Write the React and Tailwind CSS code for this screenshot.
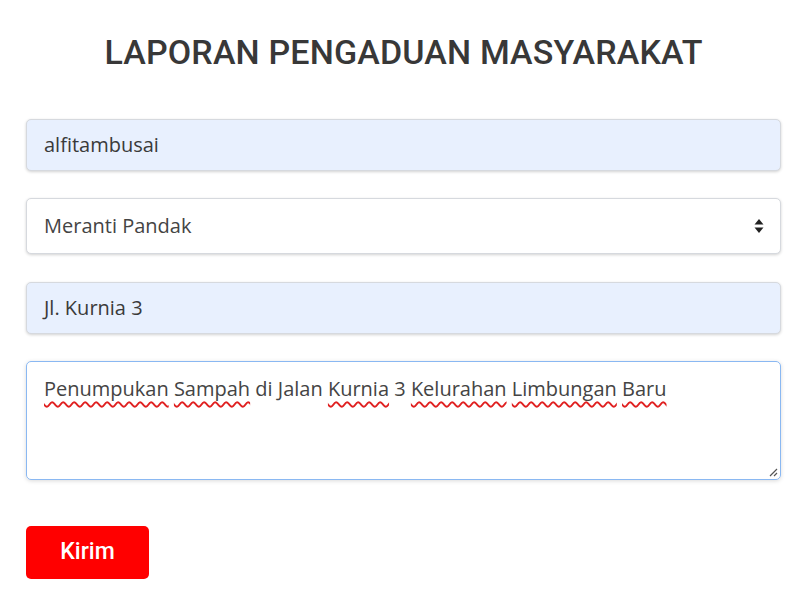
import React from "react";

const field =
  "w-full rounded-[5px] border border-[#d6d9de] shadow-[0_1px_3px_rgba(0,0,0,0.18)] px-[17px] text-[20px] text-[#3a3a3a]";

function Squiggle({ children }) {
  return (
    <span className="underline decoration-wavy decoration-[#e02020] decoration-[1.5px] underline-offset-[5px]">
      {children}
    </span>
  );
}

export default function App() {
  return (
    <div className="min-h-screen w-full bg-white font-['Open_Sans',sans-serif]">
      <div className="px-[26px] pt-[32px] pr-[19px]">
        <h1 className="text-center font-['Roboto',sans-serif] font-medium text-[34px] text-[#383838] tracking-[0.15px] leading-[40px]">
          LAPORAN PENGADUAN MASYARAKAT
        </h1>

        <form className="mt-[47px] flex flex-col">
          <div className={`${field} bg-[#e8f0fe] h-[52px] flex items-center`}>
            alfitambusai
          </div>

          <div className={`${field} bg-white h-[56px] mt-[27px] flex items-center justify-between text-[#444] pr-[16px]`}>
            <span>Meranti Pandak</span>
            <svg width="10" height="16" viewBox="0 0 10 16">
              <path d="M5 1 L9.5 6.5 H0.5 Z" fill="#222" />
              <path d="M5 15 L9.5 9.5 H0.5 Z" fill="#222" />
            </svg>
          </div>

          <div className={`${field} bg-[#e8f0fe] h-[52px] mt-[28px] flex items-center`}>
            Jl. Kurnia 3
          </div>

          <div className="relative mt-[27px] h-[119px] w-full rounded-[5px] border border-[#8ab8f2] shadow-[0_1px_4px_rgba(0,0,0,0.15)] px-[17px] pt-[12px] text-[20px] text-[#444]">
            <Squiggle>Penumpukan</Squiggle> <Squiggle>Sampah</Squiggle> di Jalan{" "}
            <Squiggle>Kurnia</Squiggle> 3 <Squiggle>Kelurahan</Squiggle>{" "}
            <Squiggle>Limbungan</Squiggle> <Squiggle>Baru</Squiggle>
            <svg className="absolute right-[2px] bottom-[2px]" width="10" height="10" viewBox="0 0 10 10">
              <path d="M9 2 L2 9 M9 6 L6 9" stroke="#555" strokeWidth="1.2" />
            </svg>
          </div>

          <div className="mt-[46px]">
            <button
              type="button"
              className="h-[53px] w-[123px] rounded-[5px] bg-[#ff0000] text-white font-['Roboto',sans-serif] font-medium text-[23px]"
            >
              Kirim
            </button>
          </div>
        </form>
      </div>
    </div>
  );
}
